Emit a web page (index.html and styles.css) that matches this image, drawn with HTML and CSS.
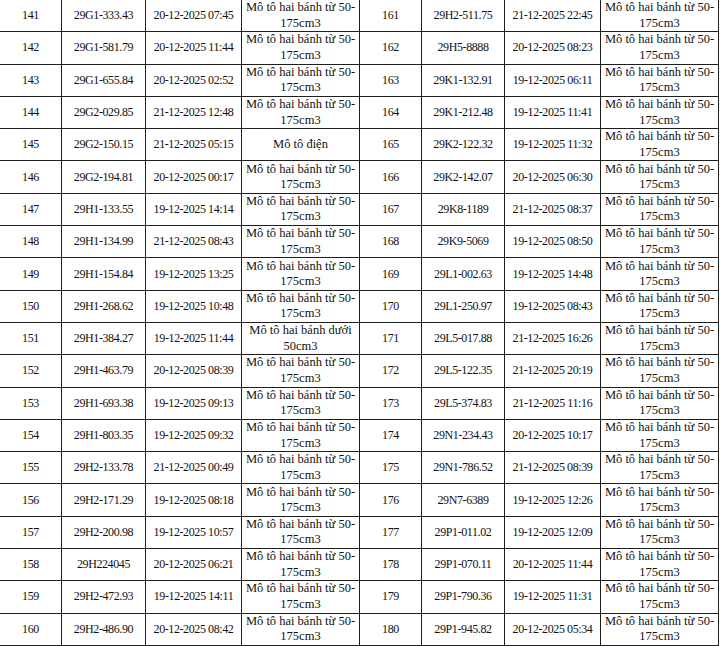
FILE: index.html
```html
<!DOCTYPE html>
<html lang="vi">
<head>
<meta charset="utf-8">
<title>Danh sách</title>
<link rel="stylesheet" href="styles.css">
</head>
<body>
<table class="list">
<colgroup>
<col class="c-no"><col class="c-plate"><col class="c-date"><col class="c-type">
<col class="c-no"><col class="c-plate2"><col class="c-date"><col class="c-type">
</colgroup>
<tbody>
<tr><td class="num">141</td><td class="num">29G1-333.43</td><td class="num">20-12-2025 07:45</td><td class="type">Mô tô hai bánh từ 50-<br>175cm3</td><td class="num">161</td><td class="num">29H2-511.75</td><td class="num">21-12-2025 22:45</td><td class="type">Mô tô hai bánh từ 50-<br>175cm3</td></tr>
<tr><td class="num">142</td><td class="num">29G1-581.79</td><td class="num">20-12-2025 11:44</td><td class="type">Mô tô hai bánh từ 50-<br>175cm3</td><td class="num">162</td><td class="num">29H5-8888</td><td class="num">20-12-2025 08:23</td><td class="type">Mô tô hai bánh từ 50-<br>175cm3</td></tr>
<tr><td class="num">143</td><td class="num">29G1-655.84</td><td class="num">20-12-2025 02:52</td><td class="type">Mô tô hai bánh từ 50-<br>175cm3</td><td class="num">163</td><td class="num">29K1-132.91</td><td class="num">19-12-2025 06:11</td><td class="type">Mô tô hai bánh từ 50-<br>175cm3</td></tr>
<tr><td class="num">144</td><td class="num">29G2-029.85</td><td class="num">21-12-2025 12:48</td><td class="type">Mô tô hai bánh từ 50-<br>175cm3</td><td class="num">164</td><td class="num">29K1-212.48</td><td class="num">19-12-2025 11:41</td><td class="type">Mô tô hai bánh từ 50-<br>175cm3</td></tr>
<tr><td class="num">145</td><td class="num">29G2-150.15</td><td class="num">21-12-2025 05:15</td><td class="type">Mô tô điện</td><td class="num">165</td><td class="num">29K2-122.32</td><td class="num">19-12-2025 11:32</td><td class="type">Mô tô hai bánh từ 50-<br>175cm3</td></tr>
<tr><td class="num">146</td><td class="num">29G2-194.81</td><td class="num">20-12-2025 00:17</td><td class="type">Mô tô hai bánh từ 50-<br>175cm3</td><td class="num">166</td><td class="num">29K2-142.07</td><td class="num">20-12-2025 06:30</td><td class="type">Mô tô hai bánh từ 50-<br>175cm3</td></tr>
<tr><td class="num">147</td><td class="num">29H1-133.55</td><td class="num">19-12-2025 14:14</td><td class="type">Mô tô hai bánh từ 50-<br>175cm3</td><td class="num">167</td><td class="num">29K8-1189</td><td class="num">21-12-2025 08:37</td><td class="type">Mô tô hai bánh từ 50-<br>175cm3</td></tr>
<tr><td class="num">148</td><td class="num">29H1-134.99</td><td class="num">21-12-2025 08:43</td><td class="type">Mô tô hai bánh từ 50-<br>175cm3</td><td class="num">168</td><td class="num">29K9-5069</td><td class="num">19-12-2025 08:50</td><td class="type">Mô tô hai bánh từ 50-<br>175cm3</td></tr>
<tr><td class="num">149</td><td class="num">29H1-154.84</td><td class="num">19-12-2025 13:25</td><td class="type">Mô tô hai bánh từ 50-<br>175cm3</td><td class="num">169</td><td class="num">29L1-002.63</td><td class="num">19-12-2025 14:48</td><td class="type">Mô tô hai bánh từ 50-<br>175cm3</td></tr>
<tr><td class="num">150</td><td class="num">29H1-268.62</td><td class="num">19-12-2025 10:48</td><td class="type">Mô tô hai bánh từ 50-<br>175cm3</td><td class="num">170</td><td class="num">29L1-250.97</td><td class="num">19-12-2025 08:43</td><td class="type">Mô tô hai bánh từ 50-<br>175cm3</td></tr>
<tr><td class="num">151</td><td class="num">29H1-384.27</td><td class="num">19-12-2025 11:44</td><td class="type">Mô tô hai bánh dưới<br>50cm3</td><td class="num">171</td><td class="num">29L5-017.88</td><td class="num">21-12-2025 16:26</td><td class="type">Mô tô hai bánh từ 50-<br>175cm3</td></tr>
<tr><td class="num">152</td><td class="num">29H1-463.79</td><td class="num">20-12-2025 08:39</td><td class="type">Mô tô hai bánh từ 50-<br>175cm3</td><td class="num">172</td><td class="num">29L5-122.35</td><td class="num">21-12-2025 20:19</td><td class="type">Mô tô hai bánh từ 50-<br>175cm3</td></tr>
<tr><td class="num">153</td><td class="num">29H1-693.38</td><td class="num">19-12-2025 09:13</td><td class="type">Mô tô hai bánh từ 50-<br>175cm3</td><td class="num">173</td><td class="num">29L5-374.83</td><td class="num">21-12-2025 11:16</td><td class="type">Mô tô hai bánh từ 50-<br>175cm3</td></tr>
<tr><td class="num">154</td><td class="num">29H1-803.35</td><td class="num">19-12-2025 09:32</td><td class="type">Mô tô hai bánh từ 50-<br>175cm3</td><td class="num">174</td><td class="num">29N1-234.43</td><td class="num">20-12-2025 10:17</td><td class="type">Mô tô hai bánh từ 50-<br>175cm3</td></tr>
<tr><td class="num">155</td><td class="num">29H2-133.78</td><td class="num">21-12-2025 00:49</td><td class="type">Mô tô hai bánh từ 50-<br>175cm3</td><td class="num">175</td><td class="num">29N1-786.52</td><td class="num">21-12-2025 08:39</td><td class="type">Mô tô hai bánh từ 50-<br>175cm3</td></tr>
<tr><td class="num">156</td><td class="num">29H2-171.29</td><td class="num">19-12-2025 08:18</td><td class="type">Mô tô hai bánh từ 50-<br>175cm3</td><td class="num">176</td><td class="num">29N7-6389</td><td class="num">19-12-2025 12:26</td><td class="type">Mô tô hai bánh từ 50-<br>175cm3</td></tr>
<tr><td class="num">157</td><td class="num">29H2-200.98</td><td class="num">19-12-2025 10:57</td><td class="type">Mô tô hai bánh từ 50-<br>175cm3</td><td class="num">177</td><td class="num">29P1-011.02</td><td class="num">19-12-2025 12:09</td><td class="type">Mô tô hai bánh từ 50-<br>175cm3</td></tr>
<tr><td class="num">158</td><td class="num">29H224045</td><td class="num">20-12-2025 06:21</td><td class="type">Mô tô hai bánh từ 50-<br>175cm3</td><td class="num">178</td><td class="num">29P1-070.11</td><td class="num">20-12-2025 11:44</td><td class="type">Mô tô hai bánh từ 50-<br>175cm3</td></tr>
<tr><td class="num">159</td><td class="num">29H2-472.93</td><td class="num">19-12-2025 14:11</td><td class="type">Mô tô hai bánh từ 50-<br>175cm3</td><td class="num">179</td><td class="num">29P1-790.36</td><td class="num">19-12-2025 11:31</td><td class="type">Mô tô hai bánh từ 50-<br>175cm3</td></tr>
<tr><td class="num">160</td><td class="num">29H2-486.90</td><td class="num">20-12-2025 08:42</td><td class="type">Mô tô hai bánh từ 50-<br>175cm3</td><td class="num">180</td><td class="num">29P1-945.82</td><td class="num">20-12-2025 05:34</td><td class="type">Mô tô hai bánh từ 50-<br>175cm3</td></tr>
</tbody>
</table>
</body>
</html>
```
FILE: styles.css
```css
html, body {
  margin: 0;
  padding: 0;
  background: #ffffff;
}

.list {
  table-layout: fixed;
  width: 719px;
  border-collapse: separate;
  border-spacing: 0;
  font-family: "Liberation Serif", "Times New Roman", serif;
  font-size: 12px;
  color: #111111;
}

.c-no { width: 62px; }
.c-plate { width: 84px; }
.c-plate2 { width: 83px; }
.c-date { width: 96px; }
.c-type { width: 118px; }

.list tr {
  height: 32.3px;
}

.list td {
  padding: 0 1px;
  border-right: 1px solid #1e1e1e;
  border-bottom: 1px solid #1e1e1e;
  text-align: center;
  vertical-align: middle;
  white-space: nowrap;
  overflow: hidden;
  line-height: 15px;
}

.list .num {
  letter-spacing: -0.4px;
}

.list .type {
  font-size: 12.5px;
  line-height: 15.5px;
}
```
